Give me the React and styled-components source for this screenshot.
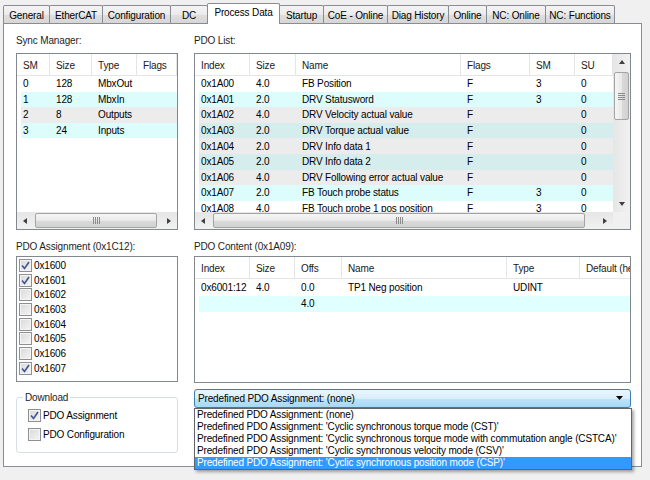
import styled, { createGlobalStyle } from "styled-components"

const GlobalStyle = createGlobalStyle`
  html, body {
    margin: 0;
    padding: 0;
    background: #f0f0f0;
  }
  body {
    font-family: "Liberation Sans", Arial, sans-serif;
    font-size: 10px;
    letter-spacing: -0.15px;
    color: #000;
  }
  * { box-sizing: border-box; }
`

const Window = styled.div`
  width: 650px;
  height: 480px;
  background: #f0f0f0;
  overflow: hidden;
  position: relative;
`

const TabStrip = styled.div`
  display: flex;
  align-items: flex-end;
  height: 23px;
  padding-left: 3px;
  position: relative;
  z-index: 2;
`

const Tab = styled.div`
  width: ${p => p.$w}px;
  height: ${p => (p.$active ? 21 : 18)}px;
  margin-right: -1px;
  margin-bottom: ${p => (p.$active ? -1 : 0)}px;
  border: 1px solid #898c95;
  border-bottom: none;
  border-radius: 2px 2px 0 0;
  background: ${p =>
    p.$active ? "#fff" : "linear-gradient(#f4f4f4, #ebebeb 50%, #dfdfdf 51%, #d6d6d6)"};
  display: flex;
  align-items: center;
  justify-content: center;
  padding-top: ${p => (p.$active ? 0 : 1)}px;
  padding-bottom: ${p => (p.$active ? 3 : 0)}px;
  white-space: nowrap;
  position: relative;
  z-index: ${p => (p.$active ? 3 : 1)};
`

const Panel = styled.div`
  margin-left: 3px;
  width: 639px;
  height: 444px;
  background: #fff;
  border: 1px solid #898c95;
  display: grid;
  grid-template-columns: 162px 437px;
  column-gap: 16px;
  padding: 10px 0 0 12px;
  position: relative;
  z-index: 1;
`

const Column = styled.div`
  display: flex;
  flex-direction: column;
`

const Label = styled.div`
  height: 14px;
  line-height: 14px;
  color: #1e1e1e;
  margin-top: ${p => p.$top || 0}px;
  white-space: nowrap;
`

const Frame = styled.div`
  height: ${p => p.$h}px;
  margin-top: ${p => p.$top}px;
  border: 1px solid #828790;
  background: #fff;
  display: grid;
  grid-template-columns: ${p => (p.$vscroll ? "1fr 17px" : "1fr")};
  grid-template-rows: ${p => (p.$hscroll ? "1fr 17px" : "1fr")};
  overflow: hidden;
`

const ListArea = styled.div`
  overflow: hidden;
  min-width: 0;
`

const Header = styled.div`
  display: grid;
  grid-template-columns: ${p => p.$cols};
  height: 22px;
  border-bottom: 1px solid #e5e5e5;
  white-space: nowrap;
`

const HeaderCell = styled.div`
  padding: 2px 0 0 6px;
  display: flex;
  align-items: center;
  border-right: 1px solid #e5e5e5;
  overflow: hidden;
  color: #1a1a1a;
`

const Row = styled.div`
  display: grid;
  grid-template-columns: ${p => p.$cols};
  height: ${p => p.$h}px;
  margin-left: 4px;
  background: ${p => p.$bg};
  white-space: nowrap;
`

const Cell = styled.div`
  padding-left: 6px;
  display: flex;
  align-items: center;
  overflow: hidden;
  &:first-child { padding-left: 2px; }
`

const HBar = styled.div`
  display: flex;
  height: 17px;
  background: linear-gradient(#e6e6e6, #f1f1f1);
`

const VBar = styled.div`
  display: flex;
  flex-direction: column;
  width: 17px;
  background: linear-gradient(to right, #e6e6e6, #f1f1f1);
`

const Arrow = styled.div`
  width: 17px;
  height: 17px;
  flex: none;
  display: flex;
  align-items: center;
  justify-content: center;
`

const Track = styled.div`
  flex: 1;
  display: flex;
  flex-direction: ${p => (p.$vertical ? "column" : "row")};
  align-items: stretch;
`

const Thumb = styled.div`
  ${p =>
    p.$vertical
      ? `height: ${p.$size}px; margin-top: ${p.$offset}px; margin-left: 1px; margin-right: 1px;`
      : `width: ${p.$size}px; margin-left: ${p.$offset}px; margin-top: 1px; margin-bottom: 1px;`}
  border: 1px solid #a4a4a4;
  border-radius: 2px;
  background: ${p =>
    p.$vertical
      ? "linear-gradient(to right, #f6f6f6, #e9e9e9 50%, #dadada 51%, #d2d2d2)"
      : "linear-gradient(#f6f6f6, #e9e9e9 50%, #dadada 51%, #d2d2d2)"};
  display: flex;
  align-items: center;
  justify-content: center;
`

const Corner = styled.div`
  background: #f0f0f0;
`

const CheckList = styled.div`
  height: 126px;
  margin-top: 2px;
  border: 1px solid #828790;
  padding: 1px 0 0 2px;
  display: flex;
  flex-direction: column;
`

const CheckRow = styled.label`
  display: flex;
  align-items: center;
  gap: ${p => p.$gap}px;
  height: ${p => p.$h}px;
  margin-top: ${p => p.$top || 0}px;
`

const Box = styled.span`
  width: 13px;
  height: 13px;
  flex: none;
  border: 1px solid #8f8f8f;
  background: linear-gradient(135deg, #d9d9d9, #f5f5f5);
  box-shadow: inset 0 0 0 1px #f4f4f4;
  display: flex;
  align-items: center;
  justify-content: center;
`

const GroupBox = styled.div`
  position: relative;
  height: 56px;
  margin-top: 15px;
  border: 1px solid #d5dfe5;
  border-radius: 3px;
  padding: 10px 0 0 11px;
`

const Legend = styled.span`
  position: absolute;
  top: -7px;
  left: 6px;
  padding: 0 2px;
  background: #fff;
  line-height: 13px;
  color: #1e1e1e;
`

const ComboWrap = styled.div`
  position: relative;
  margin-top: 6px;
`

const Combo = styled.div`
  height: 19px;
  border: 1px solid #3c7fb1;
  border-radius: 3px;
  background: linear-gradient(#eaf5fc, #d9eefb 50%, #bee3f9 51%, #a7d9f5);
  display: flex;
  align-items: center;
  padding: 0 6px 0 3px;
  justify-content: space-between;
`

const Dropdown = styled.div`
  position: absolute;
  top: 100%;
  left: 0;
  width: 438px;
  height: 62px;
  background: #fff;
  border: 1px solid #646464;
  box-shadow: 2px 2px 3px rgba(0, 0, 0, 0.35);
`

const Option = styled.div`
  height: 12px;
  line-height: 12px;
  padding-left: 2px;
  white-space: nowrap;
  background: ${p => (p.$selected ? "#3399ff" : "transparent")};
  color: ${p => (p.$selected ? "#fff" : "#000")};
`

const tabs = [
  ["General", 47],
  ["EtherCAT", 54],
  ["Configuration", 69],
  ["DC", 38],
  ["Process Data", 73, true],
  ["Startup", 45],
  ["CoE - Online", 65],
  ["Diag History", 62],
  ["Online", 39],
  ["NC: Online", 60],
  ["NC: Functions", 70],
]

const WHITE = "#ffffff"
const CYAN = "#ddfdfd"
const GRAY = "#ececec"
const GCYAN = "#d5eded"

const syncCols = [33, 42, 45, 60]
const syncRows = [
  [["0", "128", "MbxOut", ""], WHITE],
  [["1", "128", "MbxIn", ""], CYAN],
  [["2", "8", "Outputs", ""], GRAY],
  [["3", "24", "Inputs", ""], CYAN],
]

const pdoCols = [55, 46, 165, 69, 45, 60]
const pdoRows = [
  [["0x1A00", "4.0", "FB Position", "F", "3", "0"], WHITE],
  [["0x1A01", "2.0", "DRV Statusword", "F", "3", "0"], CYAN],
  [["0x1A02", "4.0", "DRV Velocity actual value", "F", "", "0"], GRAY],
  [["0x1A03", "2.0", "DRV Torque actual value", "F", "", "0"], GCYAN],
  [["0x1A04", "2.0", "DRV Info data 1", "F", "", "0"], GRAY],
  [["0x1A05", "2.0", "DRV Info data 2", "F", "", "0"], GCYAN],
  [["0x1A06", "4.0", "DRV Following error actual value", "F", "", "0"], GRAY],
  [["0x1A07", "2.0", "FB Touch probe status", "F", "3", "0"], CYAN],
  [["0x1A08", "4.0", "FB Touch probe 1 pos position", "F", "3", "0"], WHITE],
]

const contentCols = [55, 45, 47, 165, 73, 80]
const contentRows = [
  [["0x6001:12", "4.0", "0.0", "TP1 Neg position", "UDINT", ""], WHITE],
  [["", "", "4.0", "", "", ""], "#e0ffff"],
]

const assignments = [
  ["0x1600", true],
  ["0x1601", true],
  ["0x1602", false],
  ["0x1603", false],
  ["0x1604", false],
  ["0x1605", false],
  ["0x1606", false],
  ["0x1607", true],
]

const options = [
  "Predefined PDO Assignment: (none)",
  "Predefined PDO Assignment: 'Cyclic synchronous torque mode (CST)'",
  "Predefined PDO Assignment: 'Cyclic synchronous torque mode with commutation angle (CSTCA)'",
  "Predefined PDO Assignment: 'Cyclic synchronous velocity mode (CSV)'",
  "Predefined PDO Assignment: 'Cyclic synchronous position mode (CSP)'",
]

const tpl = (cols, last) =>
  cols.map((w, i) => (i === cols.length - 1 && last ? "1fr" : `${w}px`)).join(" ")
const rowTpl = (cols, last) =>
  cols
    .map((w, i) => (i === cols.length - 1 && last ? "1fr" : `${i === 0 ? w - 4 : w}px`))
    .join(" ")

const Tri = ({ dir }) => {
  const pts = {
    left: "5,1 1,4 5,7",
    right: "2,1 6,4 2,7",
    up: "1,5 4,1 7,5",
    down: "1,2 4,6 7,2",
  }[dir]
  return (
    <svg width="8" height="8" viewBox="0 0 8 8">
      <polygon points={pts} fill="#404040" />
    </svg>
  )
}

const Grip = ({ vertical }) => (
  <svg width="7" height="7" viewBox="0 0 7 7">
    {[0, 2, 4, 6].map(i =>
      vertical ? (
        <line key={i} x1="0" x2="7" y1={i + 0.5} y2={i + 0.5} stroke="#8a8a8a" strokeWidth="1" />
      ) : (
        <line key={i} y1="0" y2="7" x1={i + 0.5} x2={i + 0.5} stroke="#8a8a8a" strokeWidth="1" />
      )
    )}
  </svg>
)

const HScroll = ({ offset, size }) => (
  <HBar>
    <Arrow><Tri dir="left" /></Arrow>
    <Track>
      <Thumb $offset={offset} $size={size}><Grip /></Thumb>
    </Track>
    <Arrow><Tri dir="right" /></Arrow>
  </HBar>
)

const VScroll = ({ offset, size }) => (
  <VBar>
    <Arrow><Tri dir="up" /></Arrow>
    <Track $vertical>
      <Thumb $vertical $offset={offset} $size={size}><Grip vertical /></Thumb>
    </Track>
    <Arrow><Tri dir="down" /></Arrow>
  </VBar>
)

const Check = ({ on }) => (
  <Box>
    {on && (
      <svg width="9" height="9" viewBox="0 0 9 9">
        <path d="M1 4.5 L3.5 7.5 L8 1" fill="none" stroke="#3f5590" strokeWidth="1.6" />
      </svg>
    )}
  </Box>
)

const ListView = ({ cols, heads, rows, rowH, last = true }) => (
  <ListArea>
    <Header $cols={tpl(cols, last)}>
      {heads.map(h => (
        <HeaderCell key={h}>{h}</HeaderCell>
      ))}
    </Header>
    {rows.map(([cells, bg], i) => (
      <Row key={i} $cols={rowTpl(cols, last)} $h={rowH} $bg={bg}>
        {cells.map((c, j) => (
          <Cell key={j}>{c}</Cell>
        ))}
      </Row>
    ))}
  </ListArea>
)

export default function App() {
  return (
    <Window>
      <GlobalStyle />
      <TabStrip>
        {tabs.map(([name, w, active]) => (
          <Tab key={name} $w={w} $active={active}>
            {name}
          </Tab>
        ))}
      </TabStrip>
      <Panel>
        <Column>
          <Label>Sync Manager:</Label>
          <Frame $h={177} $top={5} $hscroll>
            <ListView
              cols={syncCols}
              heads={["SM", "Size", "Type", "Flags"]}
              rows={syncRows}
              rowH={15.6}
            />
            <HScroll offset={1} size={122} />
          </Frame>
          <Label $top={10}>PDO Assignment (0x1C12):</Label>
          <CheckList>
            {assignments.map(([name, on]) => (
              <CheckRow key={name} $h={14.7} $gap={2}>
                <Check on={on} />
                {name}
              </CheckRow>
            ))}
          </CheckList>
          <GroupBox>
            <Legend>Download</Legend>
            <CheckRow $h={14} $gap={2}>
              <Check on />
              PDO Assignment
            </CheckRow>
            <CheckRow $h={14} $gap={2} $top={5}>
              <Check />
              PDO Configuration
            </CheckRow>
          </GroupBox>
        </Column>
        <Column>
          <Label>PDO List:</Label>
          <Frame $h={177} $top={5} $hscroll $vscroll>
            <ListView
              cols={pdoCols}
              heads={["Index", "Size", "Name", "Flags", "SM", "SU"]}
              rows={pdoRows}
              rowH={15.6}
            />
            <VScroll offset={1} size={48} />
            <HScroll offset={1} size={372} />
            <Corner />
          </Frame>
          <Label $top={10}>PDO Content (0x1A09):</Label>
          <Frame $h={127} $top={2}>
            <ListView
              cols={contentCols}
              heads={["Index", "Size", "Offs", "Name", "Type", "Default (hex)"]}
              rows={contentRows}
              rowH={16.5}
              last={false}
            />
          </Frame>
          <ComboWrap>
            <Combo>
              <span>{options[0]}</span>
              <svg width="8" height="5" viewBox="0 0 8 5">
                <polygon points="0,0 7,0 3.5,4" fill="#000" />
              </svg>
            </Combo>
            <Dropdown>
              {options.map((o, i) => (
                <Option key={i} $selected={i === 4}>
                  {o}
                </Option>
              ))}
            </Dropdown>
          </ComboWrap>
        </Column>
      </Panel>
    </Window>
  )
}
